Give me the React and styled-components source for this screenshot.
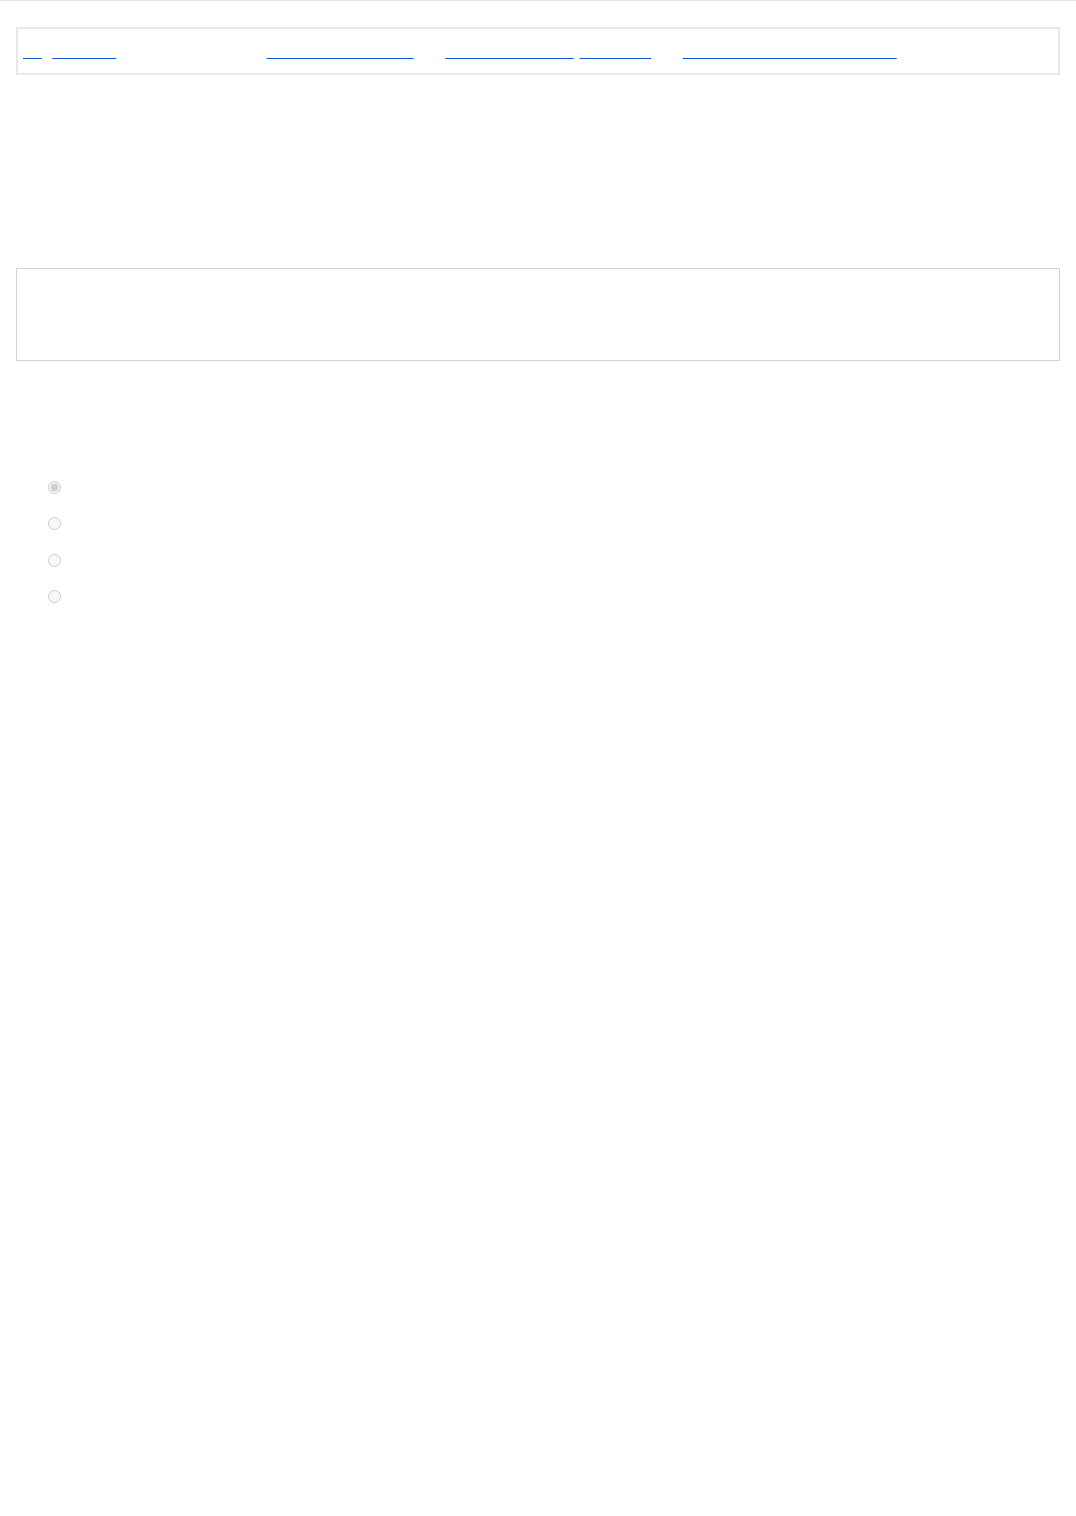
import React from "react";
import styled, { createGlobalStyle } from "styled-components";

const GlobalStyle = createGlobalStyle`
  html, body {
    margin: 0;
    padding: 0;
    background: #ffffff;
  }
  body {
    font-family: "Liberation Sans", Arial, sans-serif;
    font-size: 14px;
    color: transparent;
  }
`;

const Page = styled.div`
  min-height: 1515px;
  border-top: 1px solid #e4e0e0;
  padding: 0 16px;
`;

const Nav = styled.nav`
  display: flex;
  align-items: center;
  margin-top: 26px;
  padding: 14px 5px;
  border: 2px solid #e6e8eb;
  line-height: 16px;
  white-space: nowrap;
`;

const NavLink = styled.a`
  color: transparent;
  text-decoration: underline;
  text-decoration-color: #0b57d0;
  text-decoration-thickness: 1px;
  text-decoration-skip-ink: none;
  text-underline-offset: 2px;
`;

const NavText = styled.span`
  padding: ${({ pad }) => `0 ${pad}px`};
  color: transparent;
`;

const Title = styled.h1`
  margin: 80px 0 81px;
  font-size: 24px;
  line-height: 32px;
  font-weight: 400;
  color: transparent;
`;

const Panel = styled.div`
  box-sizing: border-box;
  height: 93px;
  border: 1px solid #cfd4da;
  padding: 16px;
`;

const Question = styled.p`
  margin: 60px 0 23.7px;
  font-size: 16px;
  line-height: 24px;
  color: transparent;
`;

const Options = styled.ul`
  list-style: none;
  margin: 0;
  padding: 0 0 0 26px;
`;

const Option = styled.li`
  display: flex;
  align-items: center;
  height: 36.67px;
`;

const Radio = styled.input.attrs({ type: "radio" })`
  width: 13px;
  height: 13px;
  margin: 0 8px 0 5.5px;
`;

const OptionLabel = styled.label`
  color: transparent;
  font-size: 14px;
`;

const options = [
  "Very satisfied",
  "Somewhat satisfied",
  "Not very satisfied",
  "Not satisfied at all",
];

export default function App() {
  return (
    <>
      <GlobalStyle />
      <Page>
        <Nav>
          <NavLink href="#">Go</NavLink>
          <NavText pad={3}>·</NavText>
          <NavLink href="#">Messages</NavLink>
          <NavText pad={2}>Signed in as guest user</NavText>
          <NavLink href="#">Notification preferences</NavLink>
          <NavText pad={14}>|</NavText>
          <NavLink href="#">Account preferences</NavLink>
          <NavText pad={1}>{"\u00a0"}</NavText>
          <NavLink href="#">Help centre</NavLink>
          <NavText pad={14}>|</NavText>
          <NavLink href="#">Report a problem with this website</NavLink>
        </Nav>

        <Title>How was your experience?</Title>

        <Panel />

        <Question>How satisfied are you with this page?</Question>

        <Options>
          {options.map((label, i) => (
            <Option key={label}>
              <Radio
                id={`opt-${i}`}
                name="satisfaction"
                disabled
                defaultChecked={i === 0}
              />
              <OptionLabel htmlFor={`opt-${i}`}>{label}</OptionLabel>
            </Option>
          ))}
        </Options>
      </Page>
    </>
  );
}
